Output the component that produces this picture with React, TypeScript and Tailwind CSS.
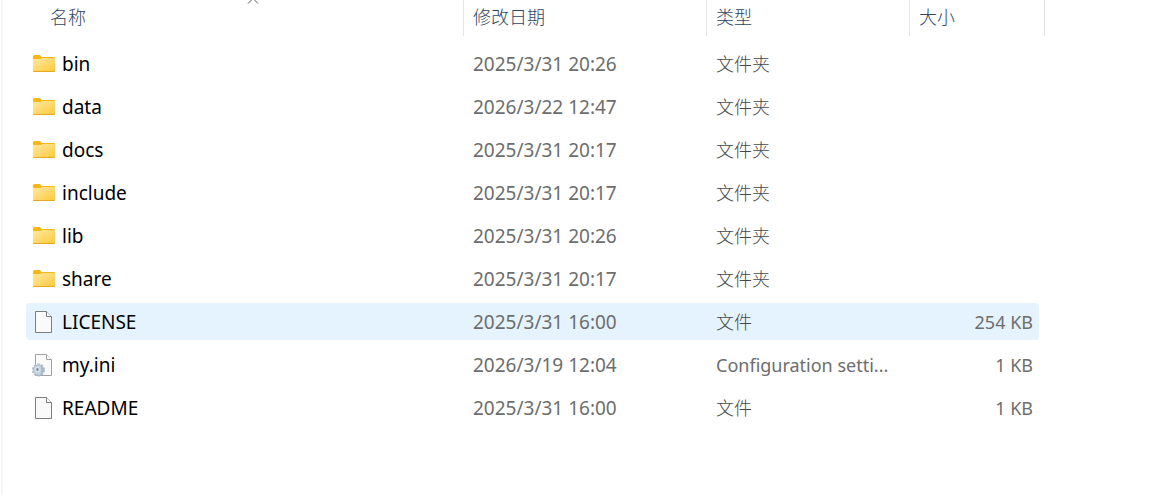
import { clsx } from "clsx";

type Kind = "folder" | "file" | "config";

const columns = [
  { key: "name", label: "名称", pad: "pl-6", sorted: true },
  { key: "date", label: "修改日期", pad: "pl-[9px]", sorted: false },
  { key: "type", label: "类型", pad: "pl-[9px]", sorted: false },
  { key: "size", label: "大小", pad: "pl-[9px]", sorted: false },
];

const entries: { name: string; date: string; type: string; size: string; kind: Kind; active?: boolean }[] = [
  { name: "bin", date: "2025/3/31 20:26", type: "文件夹", size: "", kind: "folder" },
  { name: "data", date: "2026/3/22 12:47", type: "文件夹", size: "", kind: "folder" },
  { name: "docs", date: "2025/3/31 20:17", type: "文件夹", size: "", kind: "folder" },
  { name: "include", date: "2025/3/31 20:17", type: "文件夹", size: "", kind: "folder" },
  { name: "lib", date: "2025/3/31 20:26", type: "文件夹", size: "", kind: "folder" },
  { name: "share", date: "2025/3/31 20:17", type: "文件夹", size: "", kind: "folder" },
  { name: "LICENSE", date: "2025/3/31 16:00", type: "文件", size: "254 KB", kind: "file", active: true },
  { name: "my.ini", date: "2026/3/19 12:04", type: "Configuration setti...", size: "1 KB", kind: "config" },
  { name: "README", date: "2025/3/31 16:00", type: "文件", size: "1 KB", kind: "file" },
];

function FolderIcon() {
  return (
    <svg width="24" height="24" viewBox="0 0 24 24" aria-hidden="true">
      <defs>
        <linearGradient id="folder" x1="0" y1="0" x2="1" y2="1">
          <stop offset="0" stopColor="#ffe9a6" />
          <stop offset="1" stopColor="#ffc937" />
        </linearGradient>
      </defs>
      <path d="M1 4.5Q1 3 2.5 3H8l1.5 2H22q1 0 1 1v5H1z" fill="#f8b716" />
      <path d="M1 7h7.5L10 6h13v13q0 1-1 1H2q-1 0-1-1z" fill="url(#folder)" />
      <path d="M1 19h22q0 1-1 1H2q-1 0-1-1z" fill="#e8a723" />
    </svg>
  );
}

function FileIcon({ config = false }: { config?: boolean }) {
  return (
    <svg width="24" height="24" viewBox="0 0 24 24" aria-hidden="true">
      <path d="M3.5 1.5h11l5 5v16h-16z" fill="#fafafa" stroke={config ? "#a0a0a0" : "#7d7d7d"} />
      <path d="M14.5 1.5v5h5" fill="#fff" stroke={config ? "#a0a0a0" : "#7d7d7d"} />
      {config && (
        <g>
          <circle cx="6.5" cy="17" r="5.5" fill="#b9c8d5" stroke="#a9bac8" strokeWidth="2" strokeDasharray="2.2 1.25" />
          <circle cx="6.5" cy="17" r="4.5" fill="#c6d4df" />
          <path d="M8 12.7A4.5 4.5 0 0 1 8 21.3Q11 17 8 12.7z" fill="#a3b5c4" />
          <ellipse cx="5.5" cy="16.5" rx="2.2" ry="2.8" fill="#e6edf2" />
          <ellipse cx="5.5" cy="16.5" rx="1.2" ry="1.8" fill="#7b8995" />
        </g>
      )}
    </svg>
  );
}

export default function App() {
  return (
    <main className="ml-px min-h-screen border-l-2 border-[#f7f7f7] bg-white pl-[23px] font-['Noto_Sans','Noto_Sans_CJK_SC',sans-serif] text-[19px] leading-6 text-[#6d6d6d]">
      <table className="w-full table-fixed border-collapse">
        <colgroup>
          <col className="w-[438px]" />
          <col className="w-[243px]" />
          <col className="w-[203px]" />
          <col className="w-[135px]" />
          <col />
        </colgroup>
        <thead>
          <tr>
            {columns.map(({ key, label, pad, sorted }) => (
              <th key={key} aria-sort={sorted ? "ascending" : undefined} className="h-[42px] p-0 pb-1.5 font-light">
                <button
                  type="button"
                  className={clsx("relative flex h-9 w-full items-center border-r border-[#e5e5e5] pb-0.5 text-lg text-[#2f4563]", pad)}
                >
                  {label}
                  {sorted && (
                    <svg className="absolute top-0 left-1/2 ml-0.5" width="12" height="4" viewBox="0 0 12 4" aria-hidden="true">
                      <path d="M1 3.5l5-5 5 5" fill="none" stroke="#5a5a5a" />
                    </svg>
                  )}
                </button>
              </th>
            ))}
            <td />
          </tr>
        </thead>
        <tbody>
          {entries.map(({ name, date, type, size, kind, active }) => (
            <tr key={name}>
              <td className="p-0 py-[3px]">
                <div className={clsx("flex h-[37px] items-center gap-1.5 rounded-l-sm pl-1.5 text-black", active && "bg-[#e5f3ff]")}>
                  {kind === "folder" ? <FolderIcon /> : <FileIcon config={kind === "config"} />}
                  <span>{name}</span>
                </div>
              </td>
              <td className="p-0 py-[3px]">
                <div className={clsx("flex h-[37px] items-center pl-[9px]", active && "bg-[#e5f3ff]")}>{date}</div>
              </td>
              <td className="p-0 py-[3px]">
                <div className={clsx("flex h-[37px] items-center pr-4 pl-[9px] text-lg", active && "bg-[#e5f3ff]")}>
                  <span className={clsx("whitespace-nowrap", kind !== "config" && "font-light text-[#484848]")}>{type}</span>
                </div>
              </td>
              <td className="p-0 py-[3px] pr-1.5">
                <div className={clsx("flex h-[37px] items-center justify-end rounded-r-sm pr-1.5 text-lg", active && "bg-[#e5f3ff]")}>{size}</div>
              </td>
              <td />
            </tr>
          ))}
        </tbody>
      </table>
    </main>
  );
}
